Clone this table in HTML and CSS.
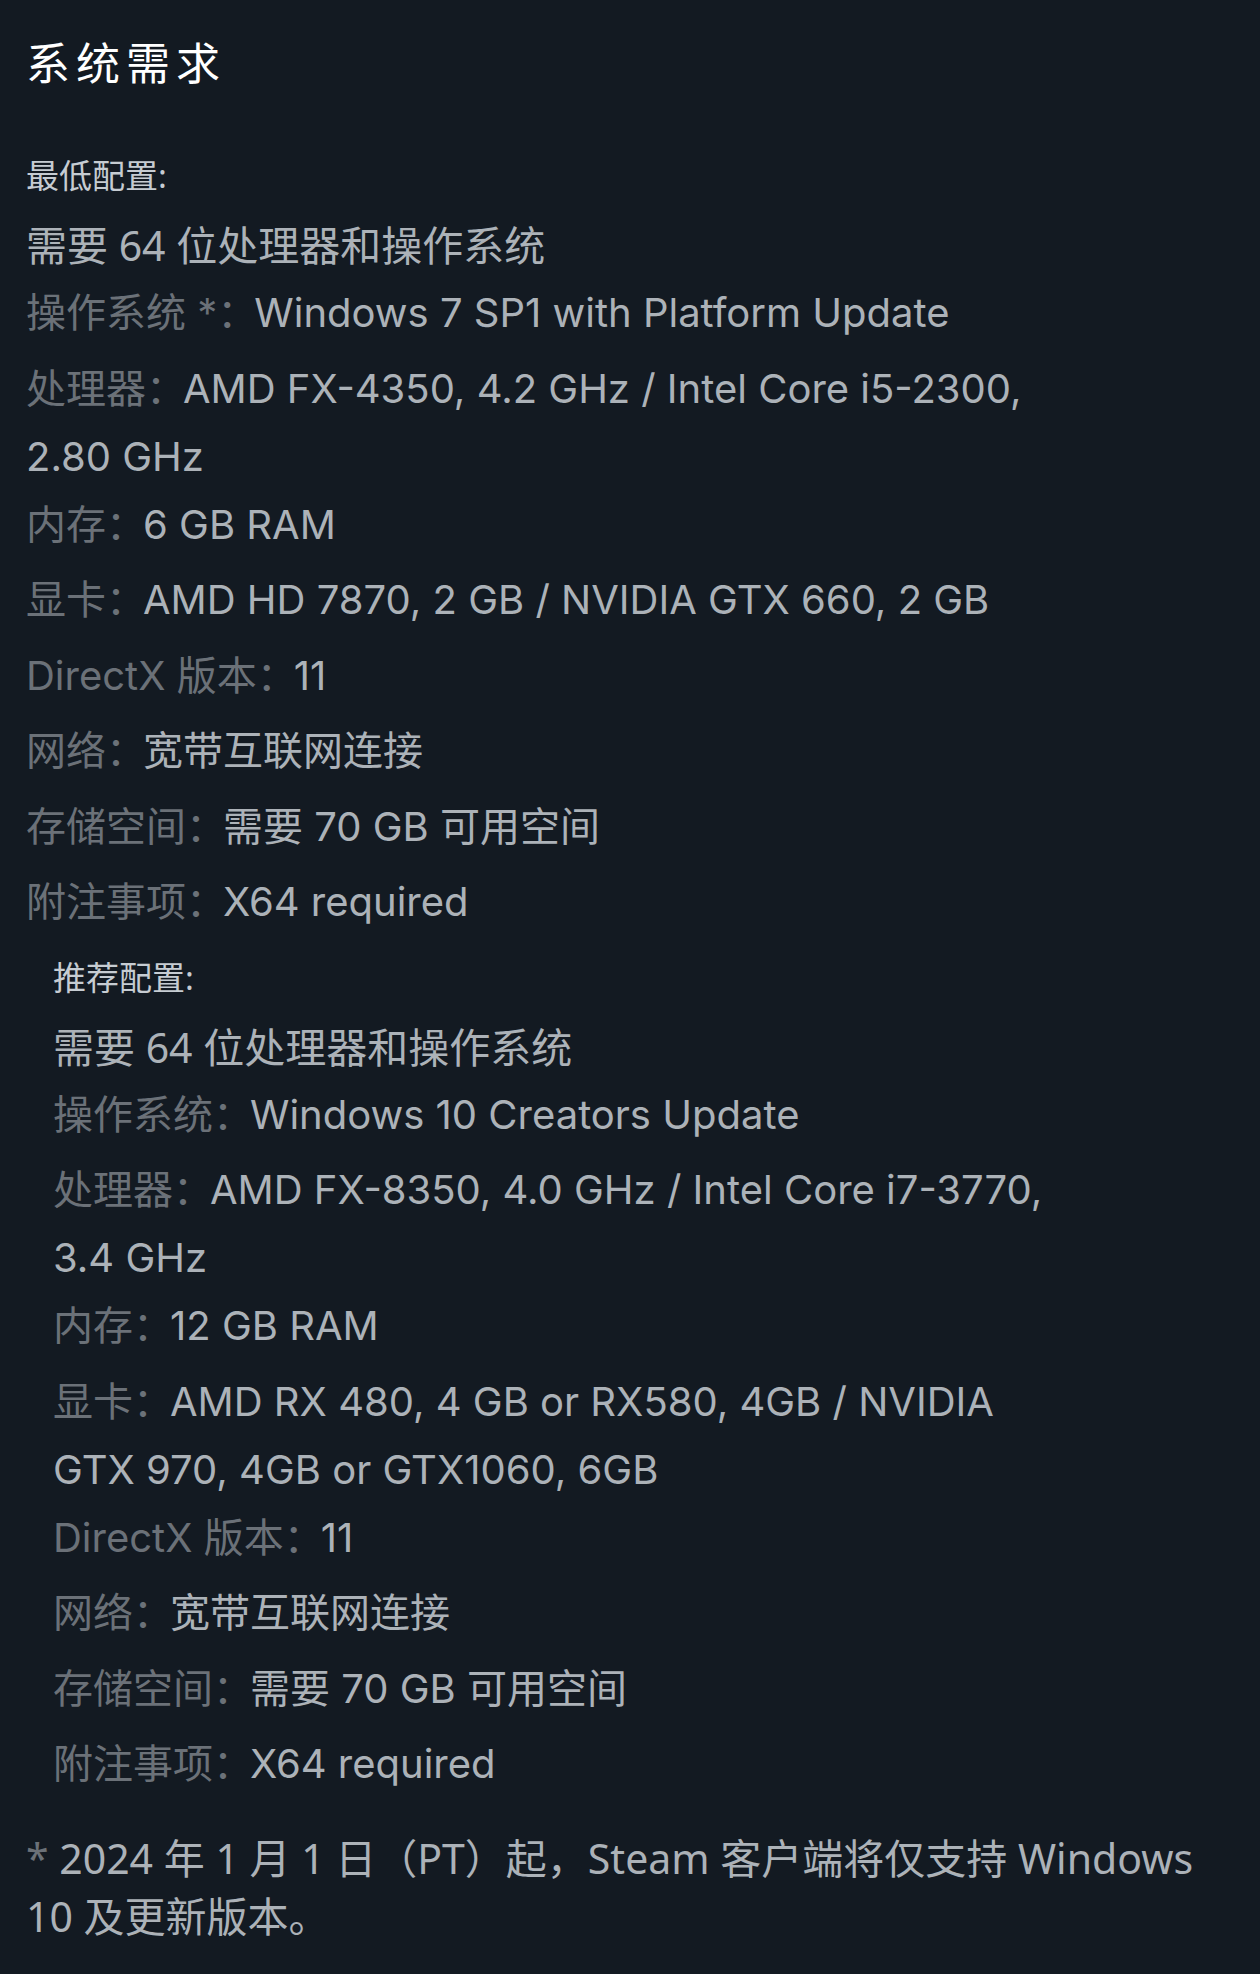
FILE: index.html
```html
<!DOCTYPE html>
<html lang="zh-CN">
<head>
<meta charset="utf-8">
<title>系统需求</title>
<link rel="stylesheet" href="styles.css">
</head>
<body>
<div class="page">
  <h2 class="title">系统需求</h2>

  <div class="req req-min">
    <div class="req-head">最低配置:</div>
    <div class="req-note">需要 64 位处理器和操作系统</div>
    <ul class="req-list">
      <li><span class="lbl">操作系统 *：</span>Windows 7 SP1 with Platform Update</li>
      <li><span class="lbl">处理器：</span>AMD FX-4350, 4.2 GHz / Intel Core i5-2300, 2.80 GHz</li>
      <li><span class="lbl">内存：</span>6 GB RAM</li>
      <li><span class="lbl">显卡：</span>AMD HD 7870, 2 GB / NVIDIA GTX 660, 2 GB</li>
      <li><span class="lbl">DirectX 版本：</span>11</li>
      <li><span class="lbl">网络：</span>宽带互联网连接</li>
      <li><span class="lbl">存储空间：</span>需要 70 GB 可用空间</li>
      <li><span class="lbl">附注事项：</span>X64 required</li>
    </ul>
  </div>

  <div class="req req-rec">
    <div class="req-head">推荐配置:</div>
    <div class="req-note">需要 64 位处理器和操作系统</div>
    <ul class="req-list">
      <li><span class="lbl">操作系统：</span>Windows 10 Creators Update</li>
      <li><span class="lbl">处理器：</span>AMD FX-8350, 4.0 GHz / Intel Core i7-3770, 3.4 GHz</li>
      <li><span class="lbl">内存：</span>12 GB RAM</li>
      <li><span class="lbl">显卡：</span>AMD RX 480, 4 GB or RX580, 4GB / NVIDIA GTX 970, 4GB or GTX1060, 6GB</li>
      <li><span class="lbl">DirectX 版本：</span>11</li>
      <li><span class="lbl">网络：</span>宽带互联网连接</li>
      <li><span class="lbl">存储空间：</span>需要 70 GB 可用空间</li>
      <li><span class="lbl">附注事项：</span>X64 required</li>
    </ul>
  </div>

  <p class="foot"><span class="star">*</span> 2024 年 1 月 1 日（PT）起，Steam 客户端将仅支持 Windows 10 及更新版本。</p>
</div>
</body>
</html>
```

FILE: styles.css
```css
html, body {
  margin: 0;
  padding: 0;
  background: #131a22;
}

body {
  font-family: "Noto Sans", "Noto Sans CJK SC", sans-serif;
  color: #acb2b8;
}

.page {
  padding: 33px 26px 0;
  min-height: 1974px;
  box-sizing: border-box;
}

.title {
  margin: 0 0 61px;
  font-size: 44px;
  line-height: 60px;
  font-weight: 400;
  letter-spacing: 6px;
  color: #ffffff;
}

.req {
  width: 1036px;
}

.req-rec {
  margin-left: 27px;
  width: 1009px;
}

.req-min {
  margin-bottom: 12px;
}

.req-head {
  font-size: 33px;
  line-height: 44px;
  color: #c6ccd2;
  margin-bottom: 13px;
}

.req-note {
  font-size: 41px;
  line-height: 68px;
}

.req-list {
  list-style: none;
  margin: 0;
  padding: 0;
}

.req-list li {
  font-family: "Inter", "Noto Sans CJK SC", sans-serif;
  font-size: 40px;
  line-height: 68px;
  min-height: 75.5px;
}

.lbl {
  color: #6b7178;
  font-feature-settings: "halt";
  margin-right: 17px;
}

.foot {
  margin: 23px 0 0;
  font-size: 41px;
  line-height: 58px;
  color: #acb2b8;
}

.star {
  color: #6b7178;
}
```
